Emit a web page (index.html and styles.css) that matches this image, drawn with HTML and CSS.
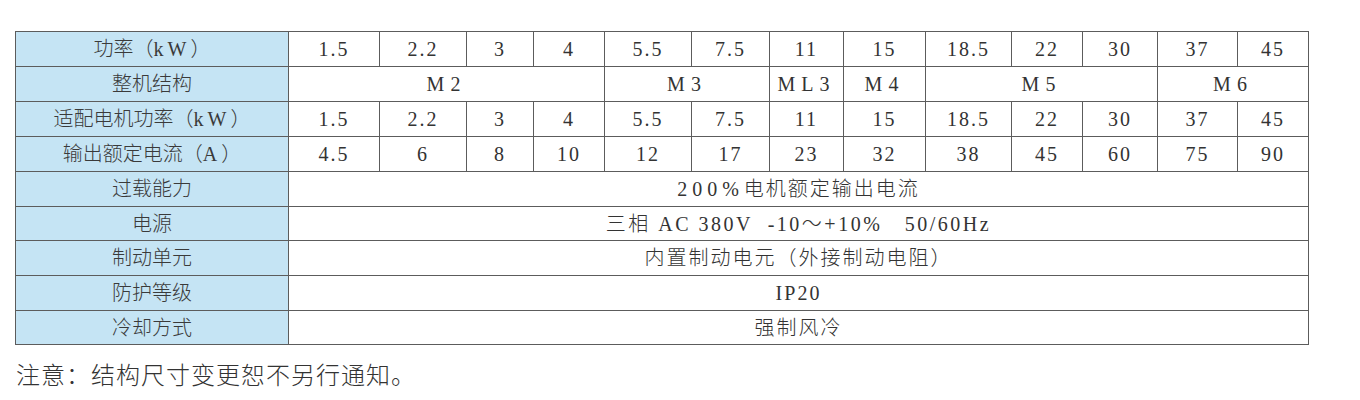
FILE: index.html
```html
<!DOCTYPE html>
<html lang="zh-CN">
<head>
<meta charset="utf-8">
<title>规格参数</title>
<link rel="stylesheet" href="styles.css">
</head>
<body>
<div class="page">
<table class="spec">
<colgroup>
<col class="c-head">
<col style="width:91px"><col style="width:87px"><col style="width:67px"><col style="width:71px">
<col style="width:87px"><col style="width:78px"><col style="width:74px"><col style="width:82px">
<col style="width:86px"><col style="width:71px"><col style="width:75px"><col style="width:80px">
<col style="width:71px">
</colgroup>
<tr class="r"><th>功率（<span class="sp">kW</span>）</th><td>1.5</td><td>2.2</td><td>3</td><td>4</td><td>5.5</td><td>7.5</td><td>11</td><td>15</td><td>18.5</td><td>22</td><td>30</td><td>37</td><td>45</td></tr>
<tr class="r"><th>整机结构</th><td colspan="4" class="sp">M2</td><td colspan="2" class="sp">M3</td><td class="sp">ML3</td><td class="sp">M4</td><td colspan="3" class="sp">M5</td><td colspan="2" class="sp">M6</td></tr>
<tr class="r"><th>适配电机功率（<span class="sp">kW</span>）</th><td>1.5</td><td>2.2</td><td>3</td><td>4</td><td>5.5</td><td>7.5</td><td>11</td><td>15</td><td>18.5</td><td>22</td><td>30</td><td>37</td><td>45</td></tr>
<tr class="r"><th>输出额定电流（<span class="sp">A</span>）</th><td>4.5</td><td>6</td><td>8</td><td>10</td><td>12</td><td>17</td><td>23</td><td>32</td><td>38</td><td>45</td><td>60</td><td>75</td><td>90</td></tr>
<tr class="r"><th>过载能力</th><td colspan="13"><span class="wide">200%</span>电机额定输出电流</td></tr>
<tr class="r2"><th>电源</th><td colspan="13" class="pre">三相 AC 380V  -10～+10%   50/60Hz</td></tr>
<tr class="r"><th>制动单元</th><td colspan="13">内置制动电元（外接制动电阻）</td></tr>
<tr class="r"><th>防护等级</th><td colspan="13">IP20</td></tr>
<tr class="r2"><th>冷却方式</th><td colspan="13">强制风冷</td></tr>
</table>
<p class="note">注意：结构尺寸变更恕不另行通知。</p>
</div>
</body>
</html>
```
FILE: styles.css
```css
html, body {
  margin: 0;
  padding: 0;
  background: #ffffff;
}
.page {
  padding: 31px 0 0 15px;
  font-family: "Liberation Serif", "Noto Sans CJK SC", serif;
  color: #333333;
}
.spec {
  border-collapse: collapse;
  table-layout: fixed;
  width: 1294px;
}
.c-head {
  width: 273px;
}
.spec th,
.spec td {
  border: 1px solid #5c5c5c;
  padding: 0;
  text-align: center;
  vertical-align: middle;
  font-size: 20px;
  font-weight: 300;
  line-height: 24px;
  white-space: nowrap;
  overflow: hidden;
}
.spec th {
  background: #c5e4f4;
  color: #3a3a3a;
}
.spec td {
  letter-spacing: 2px;
  color: #333333;
}
.spec tr.r {
  height: 35px;
}
.spec tr.r2 {
  height: 34px;
}
.spec td.sp {
  letter-spacing: 6px;
}
.spec th .sp {
  letter-spacing: 4px;
}
.spec .wide {
  letter-spacing: 5px;
}
.spec td.pre {
  white-space: pre;
  letter-spacing: 2.5px;
}
.note {
  margin: 14px 0 0 1px;
  font-size: 24px;
  line-height: 30px;
  letter-spacing: 1px;
  font-family: "Noto Sans CJK SC", sans-serif;
  font-weight: 300;
  color: #333333;
}
```
